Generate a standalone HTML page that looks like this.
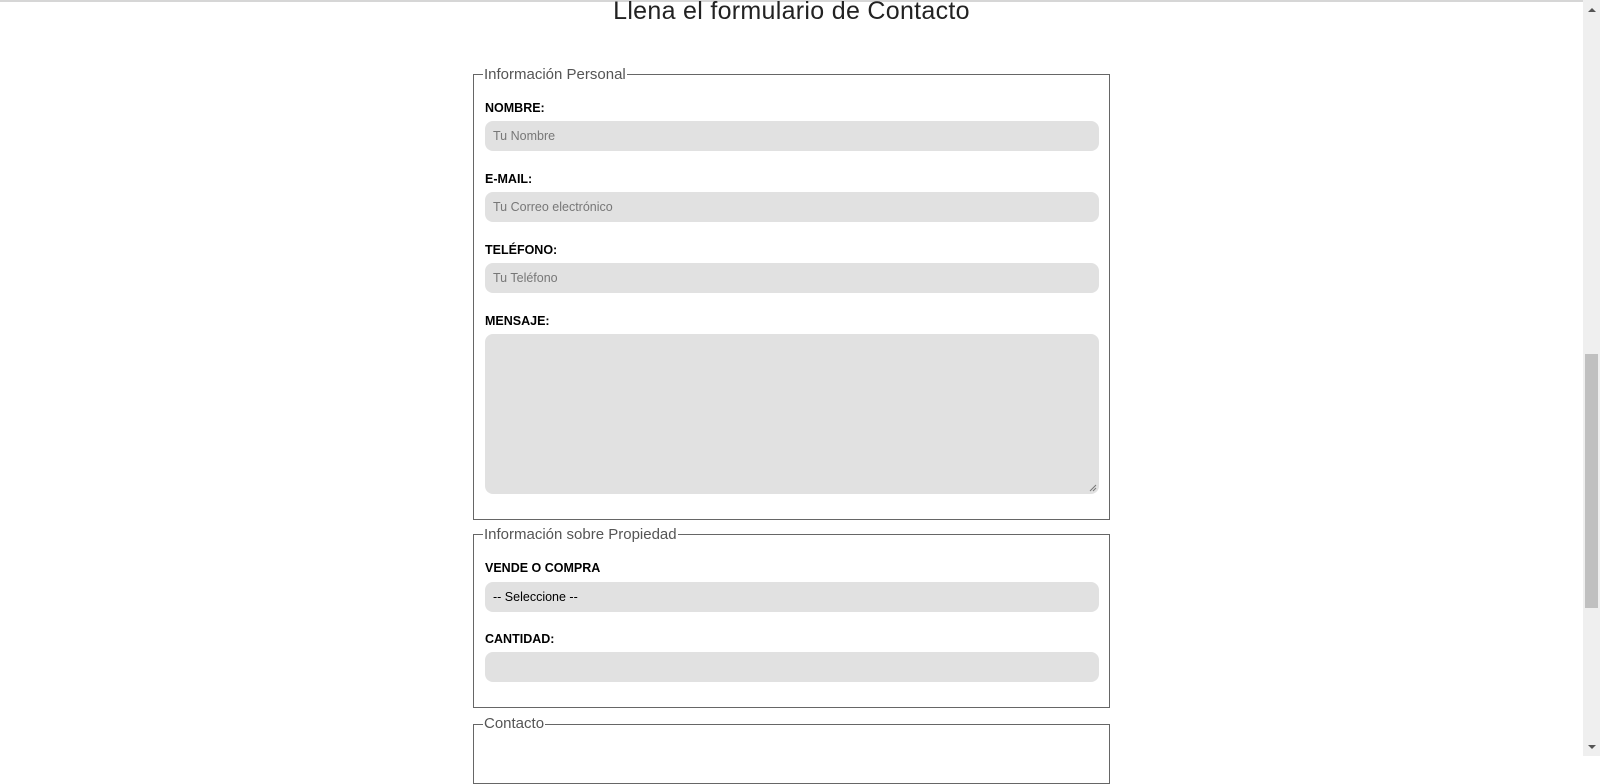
<!DOCTYPE html>
<html><head><meta charset="utf-8"><style>
html,body{margin:0;padding:0;background:#fff;width:1600px;height:756px;overflow:hidden;font-family:"Liberation Sans",sans-serif;}
*{box-sizing:border-box;}
.a{position:absolute;}
.topline{left:0;top:0;width:1583px;height:2px;background:#d6d6d6;}
.sb{left:1583px;top:0;width:17px;height:756px;background:#efefef;}
.thumb{left:1585px;top:354px;width:13px;height:254px;background:#c0c0c0;}
h1{position:absolute;left:0;width:1583px;top:-3px;margin:0;text-align:center;font-weight:300;font-size:25px;color:#222;letter-spacing:0.3px;}
.fs{border:1px solid #666;}
.lg{font-size:15px;color:#555;background:#fff;padding:0 1px;line-height:16px;}
.lb{font-size:12.5px;font-weight:bold;color:#000;}
.in{background:#e1e1e1;border-radius:8px;width:614px;left:485px;}
.ph{font-size:12.5px;color:#777;padding-left:8px;line-height:30px;}
</style></head><body>
<div class="a topline"></div>
<div class="a sb"></div>
<div class="a thumb"></div>
<div class="a" style="left:1588px;top:8px;width:0;height:0;border-left:4px solid transparent;border-right:4px solid transparent;border-bottom:4px solid #555"></div>
<div class="a" style="left:1588px;top:745px;width:0;height:0;border-left:4px solid transparent;border-right:4px solid transparent;border-top:4px solid #555"></div>
<h1>Llena el formulario de Contacto</h1>

<div class="a fs" style="left:473px;top:74px;width:637px;height:446px"></div>
<div class="a lg" style="left:483px;top:67px">Información Personal</div>
<div class="a lb" style="top:101px;left:485px">NOMBRE:</div>
<div class="a in ph" style="top:121px;height:30px">Tu Nombre</div>
<div class="a lb" style="top:172px;left:485px">E-MAIL:</div>
<div class="a in ph" style="top:192px;height:30px">Tu Correo electrónico</div>
<div class="a lb" style="top:243px;left:485px">TELÉFONO:</div>
<div class="a in ph" style="top:263px;height:30px">Tu Teléfono</div>
<div class="a lb" style="top:314px;left:485px">MENSAJE:</div>
<div class="a in" style="top:334px;height:160px"></div>
<svg class="a" style="left:1089px;top:484px" width="8" height="8"><path d="M1 7L7 1M4 7L7 4" stroke="#777" stroke-width="1"/></svg>

<div class="a fs" style="left:473px;top:534px;width:637px;height:174px"></div>
<div class="a lg" style="left:483px;top:527px">Información sobre Propiedad</div>
<div class="a lb" style="top:561px;left:485px">VENDE O COMPRA</div>
<div class="a in ph" style="top:582px;height:30px;color:#000">-- Seleccione --</div>
<div class="a lb" style="top:632px;left:485px">CANTIDAD:</div>
<div class="a in" style="top:652px;height:30px"></div>

<div class="a fs" style="left:473px;top:724px;width:637px;height:60px"></div>
<div class="a lg" style="left:483px;top:716px">Contacto</div>
</body></html>
